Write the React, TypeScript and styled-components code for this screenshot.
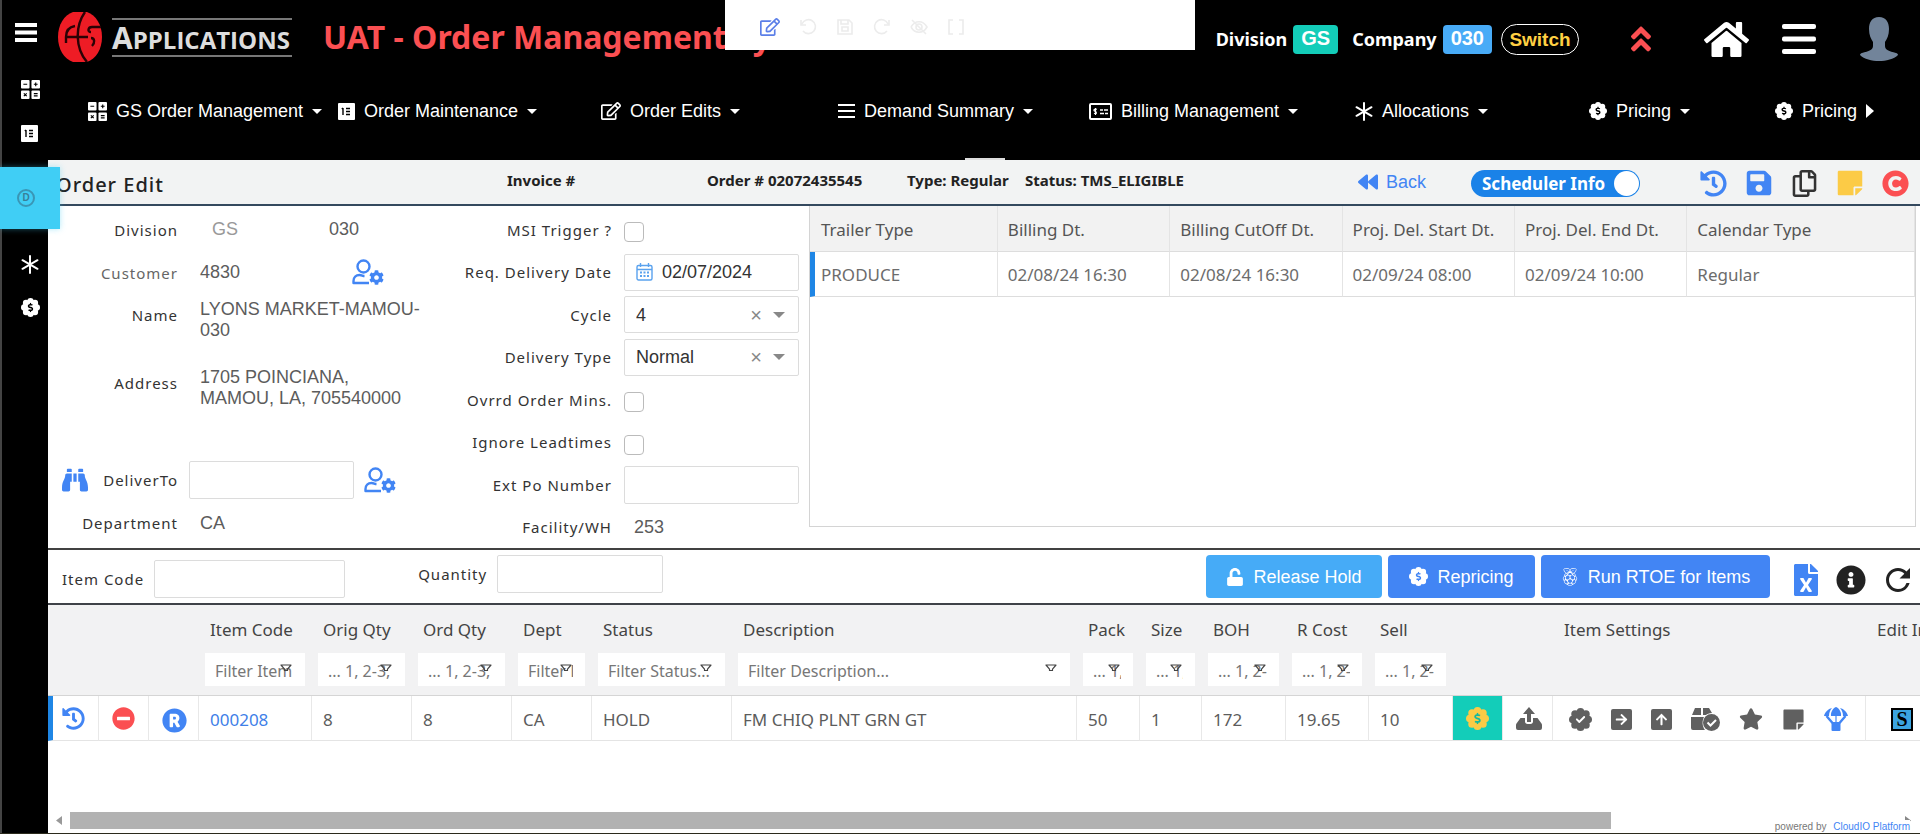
import React from 'react';
import styled, { createGlobalStyle } from 'styled-components';
import {
  FaHistory, FaSave, FaRegCopy, FaStickyNote, FaCopyright, FaHome, FaBinoculars, FaUnlock,
  FaFileExcel, FaInfoCircle, FaMinusCircle, FaRegistered, FaStar, FaArrowRight, FaArrowUp,
  FaCheck, FaDollarSign, FaCog, FaBackward, FaRegEdit, FaAngleDoubleUp, FaRaspberryPi,
} from 'react-icons/fa';
import { MdRefresh } from 'react-icons/md';

const UI = '"Noto Sans", "Open Sans", sans-serif';
const ARIAL = '"Liberation Sans", Arial, sans-serif';
const BLUE = '#4285f4';

const GlobalStyle = createGlobalStyle`
  *, *::before, *::after { box-sizing: border-box; }
  body { margin: 0; font-family: ${UI}; color: #333; background: #fff; overflow: hidden; }
  button, input, select { font: inherit; color: inherit; }
  button { border: 0; padding: 0; background: none; cursor: pointer; }
  svg { display: block; flex: none; }
`;

/* ---------- icons ---------- */

type IconProps = { size?: number; color?: string };
type BadgeProps = IconProps & { ink?: string; mark?: 'dollar' | 'check' };

const Badge = ({ size = 20, color = '#fff', ink = '#000', mark = 'dollar' }: BadgeProps) => (
  <svg width={size} height={size} viewBox="0 0 24 24" fill={color} aria-hidden="true">
    <circle cx="12" cy="12" r="9" />
    {[0, 1, 2, 3, 4, 5, 6, 7].map((i) => {
      const a = (i * Math.PI) / 4;
      return <circle key={i} cx={12 + 8 * Math.cos(a)} cy={12 + 8 * Math.sin(a)} r="4" />;
    })}
    {mark === 'dollar'
      ? <FaDollarSign x="6" y="6" size={12} color={ink} />
      : <FaCheck x="7" y="7" size={10} color={ink} />}
  </svg>
);

const MathGrid = ({ size = 20 }: IconProps) => (
  <svg width={size} height={size} viewBox="0 0 20 20" aria-hidden="true">
    <g fill="#fff">
      <rect width="9" height="9" rx="1" /><rect x="11" width="9" height="9" rx="1" />
      <rect y="11" width="9" height="9" rx="1" /><rect x="11" y="11" width="9" height="9" rx="1" />
    </g>
    <path d="M2.5 4.5h4M13.5 4.5h4M15.5 2.5v4M3 14l3 3M6 14l-3 3M13.5 14.3h4M13.5 16.7h4" stroke="#000" strokeWidth="1.2" />
  </svg>
);

const ListBox = ({ size = 17 }: IconProps) => (
  <svg width={size} height={size} viewBox="0 0 17 17" aria-hidden="true">
    <rect width="17" height="17" rx="1" fill="#fff" />
    <path d="M5 5v7M3.8 6L5 5M8 5.500h4M8 8.500h4M8 11.500h4" stroke="#000" strokeWidth="1.400" fill="none" />
  </svg>
);

const Bars = ({ width, height, stroke }: { width: number; height: number; stroke: number }) => (
  <svg width={width} height={height} viewBox={`0 0 ${width} ${height}`} fill="#fff" aria-hidden="true">
    {[0, (height - stroke) / 2, height - stroke].map((y) => (
      <rect key={y} y={y} width={width} height={stroke} rx={stroke > 4 ? 2 : 0} />
    ))}
  </svg>
);

const Asterisk = () => (
  <svg width="18" height="19" viewBox="0 0 18 19" stroke="#fff" strokeWidth="2" strokeLinecap="round" aria-hidden="true">
    <path d="M9 1v17M1.5 5.2l15 8.6M16.5 5.2l-15 8.6" />
  </svg>
);

const Cheque = () => (
  <svg width="23" height="17" viewBox="0 0 23 17" fill="none" stroke="#fff" aria-hidden="true">
    <rect x="1" y="1" width="21" height="15" rx="1" strokeWidth="2" />
    <path d="M11 7h3M15 7h4M11 10.500h4M16 10.500h3" strokeWidth="1.500" />
    <path d="M8 6.300c-3-1-4 1-2 2s2 3-1 1.900M6.500 5v7" strokeWidth="1.200" />
  </svg>
);

const Tri = ({ dir = 'down', size = 10, color = '#fff' }: IconProps & { dir?: 'down' | 'left' | 'right' }) => (
  <svg
    width={dir === 'down' ? size : Math.round(size / 2) + 1}
    height={dir === 'down' ? Math.round(size / 2) : size}
    viewBox={dir === 'down' ? '0 0 10 5' : '0 0 6 10'}
    preserveAspectRatio="none"
    fill={color}
    aria-hidden="true"
  >
    <path d={dir === 'down' ? 'M0 0h10L5 5z' : dir === 'left' ? 'M6 0v10L0 5z' : 'M0 0v10l6-5z'} />
  </svg>
);

const UserGear = () => (
  <svg width="32" height="27" viewBox="0 0 32 27" fill="none" stroke={BLUE} strokeWidth="2.400" aria-hidden="true">
    <circle cx="11.500" cy="7.500" r="6" />
    <path d="M17 24H1.500v-2c0-4 2.500-6 6-6 2.500 0 3 1 5 1" strokeLinejoin="round" />
    <FaCog x="17" y="11" size={15} color={BLUE} stroke="none" />
  </svg>
);

const Calendar = () => (
  <svg width="17" height="18" viewBox="0 0 17 18" fill="none" stroke="#5aa2ee" strokeWidth="1.400" aria-hidden="true">
    <rect x="1" y="2.500" width="15" height="14.500" rx="1.500" />
    <path d="M1 6.500h15M4.500 0v4M12.500 0v4" />
    <path d="M4 9.500h9M4 13h9" strokeWidth="2" strokeDasharray="2 1.500" />
  </svg>
);

const Funnel = () => (
  <svg width="12" height="8" viewBox="0 0 12 8" fill="none" stroke="#444" strokeWidth="1.200" aria-hidden="true">
    <path d="M1 1h10L7.500 5.200v1.300h-3V5.200z" strokeLinejoin="round" />
  </svg>
);

const Inbox = () => (
  <svg width="26" height="23" viewBox="0 0 26 23" fill="#606060" aria-hidden="true">
    <path d="M13 0l6 7h-4v8h-4V7H7z" />
    <path d="M4.500 11H9v3.500c0 1.500 1 2.500 2.500 2.500h3c1.500 0 2.500-1 2.500-2.500V11h4.500l4 5.500c.3.500.500 1 .500 1.500V21a2 2 0 0 1-2 2H2a2 2 0 0 1-2-2v-3c0-.500.200-1 .500-1.500z" />
  </svg>
);

const ArrowBox = ({ up }: { up?: boolean }) => (
  <svg width="21" height="21" viewBox="0 0 21 21" aria-hidden="true">
    <rect width="21" height="21" rx="2" fill="#606060" />
    {up ? <FaArrowUp x="4" y="4" size={13} color="#fff" /> : <FaArrowRight x="4" y="4" size={13} color="#fff" />}
  </svg>
);

const BoxCheck = () => (
  <svg width="29" height="23" viewBox="0 0 29 23" aria-hidden="true">
    <path d="M4 0h6v7H1zM12 0h6l3 5c-3 0-5 1-6 2h-3zM0 9h13c-2 4-2 9 1 13H2a2 2 0 0 1-2-2z" fill="#606060" />
    <circle cx="20.500" cy="14.500" r="8.500" fill="#606060" />
    <path d="M16.500 14.500l3 3 5.500-5.500" stroke="#fff" strokeWidth="2" fill="none" />
  </svg>
);

const Parachute = () => (
  <svg width="24" height="24" viewBox="0 0 24 24" fill={BLUE} aria-hidden="true">
    <path d="M7 9C6.500 5 9 1 12 0c3 1 5.500 5 5 9z" />
    <path d="M8 1C4 2 1 5 0 9h5C5 6 6 3 8 1zM16 1c4 1 7 4 8 8h-5c0-3-1-6-3-8z" />
    <path d="M2.500 9l6 7M21.500 9l-6 7" stroke={BLUE} strokeWidth="2.400" />
    <path d="M12 8v7" stroke={BLUE} strokeWidth="1.200" />
    <rect x="7.500" y="15" width="9" height="9" rx="1" />
  </svg>
);

const Person = () => (
  <svg width="38" height="44" viewBox="0 0 38 44" fill="#72849a" aria-hidden="true">
    <path d="M19 0c7 0 10 5 10 12 0 6-2 10-4 13v4c0 4 4 5 11 7 1 0 2 1 2 2-4 4-12 6-19 6S4 42 0 38c0-1 1-2 2-2 7-2 11-3 11-7v-4c-2-3-4-7-4-13C9 5 12 0 19 0z" />
  </svg>
);

const Globe = () => (
  <svg width="44" height="50" viewBox="0 0 44 50" aria-hidden="true">
    <path d="M15 0h14c9 3 15 13 15 25s-6 22-15 25H15C6 47 0 37 0 25S6 3 15 0z" fill="#ee1c25" />
    <g fill="none" stroke="#2a0205" strokeWidth="2.400">
      <path d="M27 0C17 14 17 36 29 50" />
      <path d="M17 14c-6 1-9 5-9 11v6M8 25h22" />
      <path d="M43 15H34c-4 0-5 5-1 5M33 26c4 0 4 5 1 8" />
    </g>
  </svg>
);

const ToolGlyph = ({ d }: { d: string }) => (
  <svg width="18" height="18" viewBox="0 0 18 18" fill="none" stroke="#ececec" strokeWidth="1.600" aria-hidden="true"><path d={d} /></svg>
);

/* ---------- shell ---------- */

const Shell = styled.div`display: flex; min-height: 100vh; border-bottom: 1px solid #2b2a1c;`;

const Sidebar = styled.nav`
  position: relative;
  z-index: 2;
  flex: none;
  width: 48px;
  background: #000;
  border-left: 2px solid #444;
  display: flex;
  flex-direction: column;
  align-items: flex-start;
`;
const SideButton = styled.button<{ $height: number }>`
  width: 46px;
  height: ${(p) => p.$height}px;
  padding-left: 19px;
  display: flex;
  align-items: center;
`;
const MenuToggle = styled(SideButton)`padding-left: 13px;`;
const ActiveSide = styled(SideButton)`
  width: 60px;
  margin: 15px 0 5px -2px;
  padding-left: 17px;
  background: #40cef5;
  box-shadow: 0 0 6px rgba(64, 206, 245, 0.4);
`;
const Coin = styled.span`
  width: 18px;
  height: 18px;
  border: 2px solid #3a96b5;
  border-radius: 50%;
  font: 700 10px/14px ${ARIAL};
  color: #3a7f98;
  text-align: center;
`;

const Main = styled.div`flex: 1; min-width: 0; display: flex; flex-direction: column;`;

const TopBar = styled.header`position: relative; height: 160px; background: #000; color: #fff;`;
const Brand = styled.div`display: flex; align-items: center; height: 74px; padding-left: 10px;`;
const LogoWord = styled.div`
  margin: 0 31px 0 10px;
  width: 180px;
  height: 39px;
  border: solid #777;
  border-width: 2px 0;
  font: 700 24px/35px "Open Sans", sans-serif;
  color: #ddd;
  &::first-letter { font-size: 30px; }
`;
const AppTitle = styled.h1`margin: 0; font-size: 32px; line-height: 44px; color: #fb4f52; font-weight: 700; white-space: nowrap;`;
const Tenant = styled.div`
  margin-left: auto;
  display: flex;
  align-items: center;
  height: 74px;
  padding: 4px 22px 0 0;
  font-weight: 700;
  font-size: 18px;
  white-space: nowrap;
`;
const Tag = styled.span<{ $bg: string }>`
  margin: 0 14px 0 6px;
  padding: 0 8px;
  height: 29px;
  border-radius: 4px;
  background: ${(p) => p.$bg};
  font: 700 20px/27px ${ARIAL};
`;
const SwitchButton = styled.button`
  margin-left: -5px;
  width: 78px;
  height: 31px;
  border: 1px solid #fff;
  border-radius: 16px;
  color: #ffd043;
  font: 700 19px/27px ${ARIAL};
`;
const TopIcon = styled.button<{ $gap: number }>`margin-left: ${(p) => p.$gap}px;`;

const EditTools = styled.div`
  position: absolute;
  top: 0;
  left: calc(50% - 259px);
  width: 470px;
  height: 50px;
  padding: 4px 0 0 35px;
  background: #fff;
  display: flex;
  align-items: center;
  gap: 19px;
`;
const NotchMark = styled.div`position: absolute; bottom: 0; left: 49%; width: 40px; height: 2px; background: #ddd;`;

const NavRow = styled.nav`
  display: grid;
  grid-template-columns: 250fr 263fr 237fr 251fr 266fr 234fr 186fr 145fr;
  height: 74px;
  padding-left: 40px;
`;
const NavButton = styled.button`
  display: flex;
  align-items: center;
  gap: 9px;
  color: #fff;
  font: 18px/22px ${ARIAL};
  white-space: nowrap;
`;

/* ---------- page header ---------- */

const PageHead = styled.section`
  display: flex;
  align-items: center;
  height: 46px;
  padding: 0 11px 0 8px;
  background: #f2f3f3;
  border-bottom: 2px solid #34495e;
  white-space: nowrap;
`;
const PageTitle = styled.h2`margin: 6px 0 0; flex: 0 0 451px; font-size: 20px; line-height: 24px; font-weight: 500; letter-spacing: 1px; color: #222;`;
const Fact = styled.strong<{ $width: number }>`flex: 0 1 ${(p) => p.$width}px; min-width: 0; margin-bottom: 4px; font-size: 15px; line-height: 20px; color: #222;`;
const BackLink = styled.a`
  margin-left: auto;
  display: flex;
  align-items: center;
  gap: 8px;
  font: 18px/22px ${ARIAL};
  color: ${BLUE};
  text-decoration: none;
`;
const Toggle = styled.label`
  position: relative;
  margin: 2px 60px 0 45px;
  width: 169px;
  height: 27px;
  padding-left: 11px;
  border-radius: 14px;
  background: #1a82e8;
  color: #fff;
  font: 700 17px/28px ${UI};
  input { position: absolute; opacity: 0; }
  &::after {
    content: '';
    position: absolute;
    top: 1px;
    right: 1px;
    width: 25px;
    height: 25px;
    border-radius: 50%;
    background: #fff;
  }
`;
const HeadIcons = styled.div`display: flex; align-items: center; gap: 18px; padding-top: 2px;`;

/* ---------- order form ---------- */

const OrderArea = styled.section`
  display: grid;
  grid-template-columns: 370px 391px minmax(0, 1fr);
  height: 344px;
  border-bottom: 2px solid #414141;
`;
const LeftForm = styled.div`
  display: grid;
  grid-template-columns: 130px 129px 1fr;
  grid-template-rows: 43px 43px 42px 94px 28px 44px 42px;
  align-items: center;
  padding-top: 2px;
`;
const MidForm = styled.div`
  display: grid;
  grid-template-columns: 194px 175px;
  grid-auto-rows: 43px 42px;
  column-gap: 12px;
  align-items: center;
  padding-top: 2px;
`;
const Label = styled.label<{ $soft?: boolean }>`
  font-size: 15px;
  line-height: 20px;
  letter-spacing: 1px;
  text-align: right;
  white-space: nowrap;
  color: ${(p) => (p.$soft ? '#666' : '#333')};
`;
const LookupLabel = styled.div`display: flex; align-items: center; justify-content: space-between; padding-left: 14px;`;
const Value = styled.span<{ $soft?: boolean; $wide?: boolean }>`
  padding-left: ${(p) => (p.$soft ? 34 : 22)}px;
  padding-top: ${(p) => (p.$wide ? 10 : 0)}px;
  grid-column: ${(p) => (p.$wide ? 'span 2' : 'auto')};
  font: 18px/21px ${ARIAL};
  white-space: nowrap;
  color: ${(p) => (p.$soft ? '#999' : '#5c5c5c')};
`;
const Filler = styled.div`grid-column: 1 / -1;`;
const IconButton = styled.button`padding-left: 45px; justify-self: start;`;
const TextBox = styled.input`
  width: 100%;
  height: 38px;
  padding: 0 11px;
  border: 1px solid #dcdcdc;
  border-radius: 2px;
  background: #fff;
  font: 18px/22px ${ARIAL};
`;
const DeliverCell = styled.div`
  display: flex;
  grid-column: span 2;
  align-items: center;
  gap: 10px;
  padding-left: 11px;
  ${TextBox} { width: 165px; }
`;
const Field = styled.div`
  display: flex;
  align-items: center;
  height: 37px;
  padding: 0 13px 0 11px;
  gap: 9px;
  border: 1px solid #dcdcdc;
  border-radius: 2px;
  font: 18px/22px ${ARIAL};
  color: #333;
  input, select { flex: 1; min-width: 0; border: 0; padding: 0; background: none; appearance: none; outline: 0; }
`;
const ClearButton = styled.button`font: 20px/20px ${ARIAL}; color: #888; margin-right: 2px;`;
const Check = styled.input`
  appearance: none;
  width: 20px;
  height: 20px;
  margin: 5px 0 0;
  border: 1px solid #bbb;
  border-radius: 4px;
  background: #fff;
`;
const Plain = styled.span`padding-left: 10px; font: 18px/21px ${ARIAL}; color: #5c5c5c;`;

const TrailerPane = styled.div`
  height: 321px;
  margin-right: 4px;
  border: solid #d4d4d4;
  border-width: 0 1px 1px;
`;
const TrailerTable = styled.table`
  width: 100%;
  border-collapse: separate;
  border-spacing: 0;
  table-layout: fixed;
  font-size: 17px;
  th, td {
    padding: 1px 0 0 10px;
    text-align: left;
    font-weight: 400;
    border-right: 1px solid #e4e4e4;
    border-bottom: 1px solid #ddd;
    white-space: nowrap;
  }
  th { height: 46px; background: #f2f2f2; color: #555; }
  th:first-child { padding-left: 11px; }
  td { height: 45px; color: #6c6c6c; }
  td:first-child { border-left: 5px solid #1f86e5; padding-left: 6px; }
`;

/* ---------- item toolbar ---------- */

const ItemBar = styled.section`
  display: flex;
  align-items: center;
  height: 55px;
  padding: 0 4px 0 14px;
  border-bottom: 2px solid #3f4248;
`;
const ItemLabel = styled.label<{ $gap?: number; $raise?: boolean }>`
  margin: ${(p) => (p.$raise ? '0' : '4px')} 0 ${(p) => (p.$raise ? '6px' : '0')} ${(p) => p.$gap || 0}px;
  display: flex;
  align-items: center;
  gap: 10px;
  font-size: 15px;
  line-height: 20px;
  letter-spacing: 1px;
  white-space: nowrap;
`;
const ItemInput = styled(TextBox)<{ $w: number }>`width: ${(p) => p.$w}px;`;
const Actions = styled.div`display: flex; gap: 6px; margin: 0 20px 0 auto;`;
const Action = styled.button<{ $light?: boolean; $w: number }>`
  display: flex;
  align-items: center;
  justify-content: center;
  gap: 9px;
  width: ${(p) => p.$w}px;
  height: 43px;
  border-radius: 4px;
  background: ${(p) => (p.$light ? '#46abf7' : BLUE)};
  color: #fff;
  font: 18px/22px ${ARIAL};
  white-space: nowrap;
`;
const BarIcons = styled.div`display: flex; align-items: center; gap: 14px; padding-top: 6px;`;

/* ---------- items grid ---------- */

const GridPane = styled.section`flex: 1; overflow: hidden; background: #fff;`;
const ItemTable = styled.table`
  width: 1928px;
  table-layout: fixed;
  border-collapse: separate;
  border-spacing: 0;
  font-size: 17px;
  th { background: #f2f2f3; font-weight: 400; text-align: left; color: #444; padding: 0 0 0 11px; white-space: nowrap; }
  td { height: 45px; padding: 2px 0 0 11px; border-right: 1px solid #e8e8e8; border-bottom: 1px solid #e4e4e4; color: #5c5c5c; white-space: nowrap; }
`;
const HeadRow = styled.tr`height: 44px; th { padding-top: 5px; }`;
const FilterRow = styled.tr`
  height: 47px;
  th { padding: 0 7px 9px 6px; border-bottom: 1px solid #d5d5d5; vertical-align: bottom; }
`;
const CenterHead = styled.th`&& { text-align: center; padding-right: 197px; }`;
const FilterBox = styled.div`
  position: relative;
  svg { position: absolute; top: 11px; right: 13px; }
  input {
    display: block;
    width: 100%;
    height: 33px;
    padding: 2px 12px 0 10px;
    border: 0;
    background: #fff;
    outline: 0;
    font-size: 16px;
  }
  input::placeholder { color: #777; opacity: 1; }
`;
const IconCell = styled.td<{ $first?: boolean; $low?: boolean; $bg?: string }>`
  && {
    padding-top: ${(p) => (p.$low ? 5 : 0)}px;
    padding-left: ${(p) => (p.$first ? 9 : 13)}px;
    border-left: ${(p) => (p.$first ? '5px solid #1f86e5' : '0')};
    background: ${(p) => p.$bg || 'transparent'};
  }
  button { display: block; }
`;
const SettingIcons = styled.div`display: flex; align-items: center; gap: 19px; padding-left: 5px;`;
const ItemLink = styled.a`color: #3f7fe8; text-decoration: none;`;
const SBadge = styled.button`
  display: block;
  margin-left: 14px;
  width: 22px;
  height: 23px;
  border: 2px solid #000;
  background: #3ba4e0;
  color: #000;
  font: 700 20px/18px "Liberation Serif", serif;
`;

const BottomBar = styled.footer`
  position: relative;
  display: flex;
  align-items: center;
  height: 22px;
  padding: 0 9px 3px 8px;
`;
const Track = styled.div`flex: 1; margin-left: 8px; height: 17px;`;
const Thumb = styled.div`width: 84%; height: 17px; background: #b2b2b2;`;
const Powered = styled.small`
  position: absolute;
  right: 10px;
  bottom: 0;
  font: 10px/13px ${ARIAL};
  color: #777;
  background: #fff;
  a { color: ${BLUE}; text-decoration: none; margin-left: 4px; }
`;

/* ---------- data ---------- */

const navItems: { icon: React.ReactNode; text: string; dir?: 'right' }[] = [
  { icon: <MathGrid size={19} />, text: 'GS Order Management' },
  { icon: <ListBox />, text: 'Order Maintenance' },
  { icon: <FaRegEdit size={20} />, text: 'Order Edits' },
  { icon: <Bars width={17} height={14} stroke={2} />, text: 'Demand Summary' },
  { icon: <Cheque />, text: 'Billing Management' },
  { icon: <Asterisk />, text: 'Allocations' },
  { icon: <Badge size={18} />, text: 'Pricing' },
  { icon: <Badge size={18} />, text: 'Pricing', dir: 'right' },
];

const tools = [
  'M2 2v5h5M3 6a7 7 0 1 1 1 7',
  'M2 2h11l3 3v11H2zM5 2v4h7V2M6 9h6v4H6z',
  'M16 2v5h-5M15 6a7 7 0 1 0-1 7',
  'M1 9c4-7 12-7 16 0-4 7-12 7-16 0M2 2l14 14M6 9a3 3 0 1 0 6 0 3 3 0 1 0-6 0',
  'M6 2H2v14h4M12 2h4v14h-4',
];

const trailerCols = [
  { head: 'Trailer Type', cell: 'PRODUCE', width: '17%' },
  { head: 'Billing Dt.', cell: '02/08/24 16:30', width: '15.6%' },
  { head: 'Billing CutOff Dt.', cell: '02/08/24 16:30', width: '15.6%' },
  { head: 'Proj. Del. Start Dt.', cell: '02/09/24 08:00', width: '15.6%' },
  { head: 'Proj. Del. End Dt.', cell: '02/09/24 10:00', width: '15.6%' },
  { head: 'Calendar Type', cell: 'Regular', width: 'auto' },
];

const itemCols = [
  { head: 'Item Code', hint: 'Filter Item Code...', cell: <ItemLink href="#item">000208</ItemLink>, w: 113 },
  { head: 'Orig Qty', hint: '... 1, 2-3, 5', cell: '8', w: 100 },
  { head: 'Ord Qty', hint: '... 1, 2-3, 5', cell: '8', w: 100 },
  { head: 'Dept', hint: 'Filter Dept...', cell: 'CA', w: 80 },
  { head: 'Status', hint: 'Filter Status...', cell: 'HOLD', w: 140 },
  { head: 'Description', hint: 'Filter Description...', cell: 'FM CHIQ PLNT GRN GT', w: 345 },
  { head: 'Pack', hint: '... 1, 2-3', cell: '50', w: 63 },
  { head: 'Size', hint: '... 1, 2-3', cell: '1', w: 62 },
  { head: 'BOH', hint: '... 1, 2-3', cell: '172', w: 84 },
  { head: 'R Cost', hint: '... 1, 2-3', cell: '19.65', w: 83 },
  { head: 'Sell', hint: '... 1, 2-3', cell: '10', w: 84 },
];

export default function App() {
  return (
    <>
      <GlobalStyle />
      <Shell>
        <Sidebar>
          <MenuToggle $height={64} aria-label="Menu"><Bars width={22} height={19} stroke={4} /></MenuToggle>
          <SideButton $height={50} aria-label="Order management"><MathGrid size={19} /></SideButton>
          <SideButton $height={38} aria-label="Order maintenance"><ListBox /></SideButton>
          <ActiveSide $height={62} aria-label="Demand"><Coin>D</Coin></ActiveSide>
          <SideButton $height={60} aria-label="Allocations"><Asterisk /></SideButton>
          <SideButton $height={26} aria-label="Pricing"><Badge size={19} /></SideButton>
        </Sidebar>

        <Main>
          <TopBar>
            <Brand>
              <Globe />
              <LogoWord>APPLICATIONS</LogoWord>
              <AppTitle>UAT - Order Management System</AppTitle>
              <Tenant>
                Division<Tag $bg="#13cdb9">GS</Tag>
                Company<Tag $bg="#48abf7">030</Tag>
                <SwitchButton>Switch</SwitchButton>
                <TopIcon $gap={46} aria-label="Collapse"><FaAngleDoubleUp size={32} color="#fb4f52" /></TopIcon>
                <TopIcon $gap={47} aria-label="Home"><FaHome size={45} color="#fff" /></TopIcon>
                <TopIcon $gap={33} aria-label="Main menu"><Bars width={34} height={30} stroke={5} /></TopIcon>
                <TopIcon $gap={44} aria-label="Account"><Person /></TopIcon>
              </Tenant>
            </Brand>
            <NavRow>
              {navItems.map((n, i) => (
                <NavButton key={i}>
                  {n.icon}{n.text}
                  {n.dir ? <Tri dir="right" size={14} /> : <Tri />}
                </NavButton>
              ))}
            </NavRow>
            <EditTools>
              <button aria-label="Edit page"><FaRegEdit size={20} color="#5b7fe8" /></button>
              {tools.map((d) => <ToolGlyph key={d} d={d} />)}
            </EditTools>
            <NotchMark />
          </TopBar>

          <PageHead>
            <PageTitle>Order Edit</PageTitle>
            <Fact $width={200}>Invoice #</Fact>
            <Fact $width={200}>Order # 02072435545</Fact>
            <Fact $width={118}>Type: Regular</Fact>
            <Fact $width={160}>Status: TMS_ELIGIBLE</Fact>
            <BackLink href="#back"><FaBackward size={20} />Back</BackLink>
            <Toggle><input type="checkbox" defaultChecked />Scheduler Info</Toggle>
            <HeadIcons>
              <button aria-label="History"><FaHistory size={27} color={BLUE} /></button>
              <button aria-label="Save"><FaSave size={28} color={BLUE} /></button>
              <button aria-label="Copy"><FaRegCopy size={27} color="#333" /></button>
              <button aria-label="Notes"><FaStickyNote size={28} color="#fccb46" /></button>
              <button aria-label="Cancel"><FaCopyright size={27} color="#fb4f52" /></button>
            </HeadIcons>
          </PageHead>

          <OrderArea>
            <LeftForm>
              <Label as="span">Division</Label>
              <Value $soft>GS</Value>
              <Value>030</Value>

              <Label as="span" $soft>Customer</Label>
              <Value>4830</Value>
              <IconButton aria-label="Customer settings"><UserGear /></IconButton>

              <Label as="span">Name</Label>
              <Value $wide>LYONS MARKET-MAMOU-<br />030</Value>

              <Label as="span">Address</Label>
              <Value $wide>1705 POINCIANA,<br />MAMOU, LA, 705540000</Value>

              <Filler />

              <LookupLabel>
                <button aria-label="Look up delivery"><FaBinoculars size={26} color={BLUE} /></button>
                <Label htmlFor="deliver">DeliverTo</Label>
              </LookupLabel>
              <DeliverCell>
                <TextBox id="deliver" />
                <button aria-label="Delivery settings"><UserGear /></button>
              </DeliverCell>

              <Label as="span">Department</Label>
              <Value>CA</Value>
            </LeftForm>

            <MidForm>
              <Label htmlFor="msi">MSI Trigger ?</Label>
              <Check id="msi" type="checkbox" />
              <Label htmlFor="date">Req. Delivery Date</Label>
              <Field><Calendar /><input id="date" defaultValue="02/07/2024" /></Field>
              <Label htmlFor="cycle">Cycle</Label>
              <Field>
                <select id="cycle"><option>4</option></select>
                <ClearButton aria-label="Clear cycle">×</ClearButton><Tri size={12} color="#888" />
              </Field>
              <Label htmlFor="dtype">Delivery Type</Label>
              <Field>
                <select id="dtype"><option>Normal</option></select>
                <ClearButton aria-label="Clear delivery type">×</ClearButton><Tri size={12} color="#888" />
              </Field>
              <Label htmlFor="mins">Ovrrd Order Mins.</Label>
              <Check id="mins" type="checkbox" />
              <Label htmlFor="lead">Ignore Leadtimes</Label>
              <Check id="lead" type="checkbox" />
              <Label htmlFor="po">Ext Po Number</Label>
              <TextBox id="po" />
              <Label as="span">Facility/WH</Label>
              <Plain>253</Plain>
            </MidForm>

            <TrailerPane>
              <TrailerTable>
                <colgroup>{trailerCols.map((c) => <col key={c.head} width={c.width} />)}</colgroup>
                <thead><tr>{trailerCols.map((c) => <th key={c.head}>{c.head}</th>)}</tr></thead>
                <tbody><tr>{trailerCols.map((c) => <td key={c.head}>{c.cell}</td>)}</tr></tbody>
              </TrailerTable>
            </TrailerPane>
          </OrderArea>

          <ItemBar>
            <ItemLabel>Item Code<ItemInput $w={191} /></ItemLabel>
            <ItemLabel $gap={73} $raise>Quantity<ItemInput $w={166} /></ItemLabel>
            <Actions>
              <Action $light $w={176}><FaUnlock size={18} />Release Hold</Action>
              <Action $w={147}><Badge size={19} ink={BLUE} />Repricing</Action>
              <Action $w={229}><FaRaspberryPi size={18} />Run RTOE for Items</Action>
            </Actions>
            <BarIcons>
              <button aria-label="Export to Excel"><FaFileExcel size={32} color={BLUE} /></button>
              <button aria-label="Information"><FaInfoCircle size={30} color="#222" /></button>
              <button aria-label="Refresh"><MdRefresh size={36} color="#222" /></button>
            </BarIcons>
          </ItemBar>

          <GridPane>
            <ItemTable>
              <colgroup>
                <col width="51" /><col width="50" /><col width="50" />
                {itemCols.map((c) => <col key={c.head} width={c.w} />)}
                <col width="50" /><col width="50" /><col width="313" /><col width="110" />
              </colgroup>
              <thead>
                <HeadRow>
                  <th /><th /><th />
                  {itemCols.map((c) => <th key={c.head}>{c.head}</th>)}
                  <th /><th /><CenterHead>Item Settings</CenterHead><th>Edit Info</th>
                </HeadRow>
                <FilterRow>
                  <th /><th /><th />
                  {itemCols.map((c) => (
                    <th key={c.head}>
                      <FilterBox><input placeholder={c.hint} aria-label={`Filter ${c.head}`} /><Funnel /></FilterBox>
                    </th>
                  ))}
                  <th /><th /><th /><th />
                </FilterRow>
              </thead>
              <tbody>
                <tr>
                  <IconCell $first><button aria-label="Item history"><FaHistory size={23} color={BLUE} /></button></IconCell>
                  <IconCell><button aria-label="Remove item"><FaMinusCircle size={23} color="#fb4f52" /></button></IconCell>
                  <IconCell $low><button aria-label="Replace item"><FaRegistered size={25} color={BLUE} /></button></IconCell>
                  {itemCols.map((c) => <td key={c.head}>{c.cell}</td>)}
                  <IconCell $bg="#13cdb9"><button aria-label="Price"><Badge size={23} color="#fccb46" ink="#13b9a0" /></button></IconCell>
                  <IconCell><button aria-label="Upload"><Inbox /></button></IconCell>
                  <td>
                    <SettingIcons>
                      <Badge size={23} color="#606060" ink="#fff" mark="check" />
                      <ArrowBox />
                      <ArrowBox up />
                      <BoxCheck />
                      <FaStar size={24} color="#606060" />
                      <FaStickyNote size={23} color="#606060" />
                      <Parachute />
                    </SettingIcons>
                  </td>
                  <td><SBadge>S</SBadge></td>
                </tr>
              </tbody>
            </ItemTable>
          </GridPane>

          <BottomBar>
            <Tri dir="left" size={9} color="#999" />
            <Track><Thumb /></Track>
            <Tri dir="right" size={9} color="#888" />
            <Powered>powered by <a href="#platform">CloudIO Platform</a></Powered>
          </BottomBar>
        </Main>
      </Shell>
    </>
  );
}
